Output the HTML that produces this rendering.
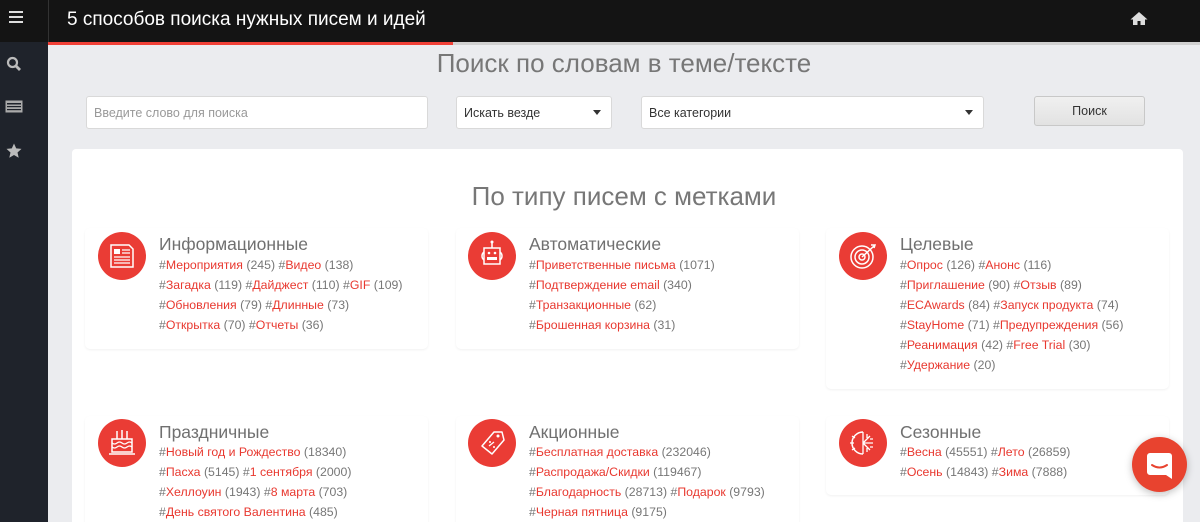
<!DOCTYPE html>
<html><head><meta charset="utf-8"><style>
*{margin:0;padding:0;box-sizing:border-box}
html{overflow:hidden;width:1200px;height:522px}
body{width:1200px;height:522px;overflow:hidden;background:#ebecef;font-family:"Liberation Sans","DejaVu Sans",sans-serif;position:relative}
.side{position:absolute;left:0;top:0;width:48px;height:522px;background:#1f232b}
.sidetop{position:absolute;left:0;top:0;width:48px;height:42px;background:#141414}
.top{position:absolute;left:48px;top:0;width:1152px;height:42px;background:#141414;border-left:1px solid #333}
.top h1{position:absolute;left:18px;top:9px;font-size:19px;font-weight:normal;color:#fff}
.red{position:absolute;left:48px;top:42px;width:405px;height:3px;background:#f04037}
.gline{position:absolute;left:453px;top:42px;width:747px;height:3px;background:#d0d0d0}
.h2{position:absolute;left:0;width:1200px;text-align:center;color:#777;font-size:25px;padding-left:48px}
.inp{position:absolute;top:96px;height:33px;background:#fff;border:1px solid #d9d9d9;border-radius:3px;font-size:12.5px;color:#333;padding:9px 7px}
.arr{position:absolute;right:10px;top:13px;border-left:4.5px solid transparent;border-right:4.5px solid transparent;border-top:5px solid #333}
.btn{position:absolute;left:1034px;top:96px;width:111px;height:30px;background:linear-gradient(#f0f0f0,#e2e2e2);border:1px solid #c8c8c8;border-radius:3px;text-align:center;font-size:12.5px;color:#333;line-height:28px}
.panel{position:absolute;left:72px;top:149px;width:1111px;height:373px;background:#fff;border-radius:4px 4px 0 0}
.card{position:absolute;width:343px;border-radius:5px;box-shadow:0 1px 2px rgba(0,0,0,.06)}
.ic{position:absolute;width:48px;height:48px;border-radius:50%;background:#ea3c35}
.ic svg{position:absolute;left:0;top:0}
.t{position:absolute;font-size:17.5px;color:#707070;white-space:nowrap}
.tags{position:absolute;font-size:12.3px;color:#777;line-height:20px;white-space:nowrap}
.tags b{font-weight:normal;color:#e8382f}
.chat{position:absolute;left:1132px;top:437px;width:55px;height:55px;border-radius:50%;background:#e8432f;box-shadow:0 2px 8px rgba(0,0,0,.25)}
</style></head><body>
<div class="side"></div>
<div class="sidetop"></div>
<svg style="position:absolute;left:9px;top:11px" width="14" height="12"><rect y="0" width="14" height="2" fill="#ddd"/><rect y="5" width="14" height="2" fill="#ddd"/><rect y="10" width="14" height="2" fill="#ddd"/></svg>
<svg style="position:absolute;left:6px;top:56px" width="16" height="16"><circle cx="6.5" cy="6.5" r="4.5" fill="none" stroke="#bbb" stroke-width="2.2"/><path d="M10 10l4 4" stroke="#bbb" stroke-width="2.8"/></svg>
<svg style="position:absolute;left:5px;top:100px" width="18" height="13"><rect x="0.5" y="0.5" width="17" height="12" fill="#aaa"/><rect x="2" y="3" width="14" height="1.5" fill="#1f232b"/><rect x="2" y="6" width="14" height="1.2" fill="#1f232b"/><rect x="2" y="9" width="14" height="1.2" fill="#1f232b"/></svg>
<svg style="position:absolute;left:6px;top:143px" width="16" height="15"><path d="M8 0.5l2.2 4.9 5.3.5-4 3.6 1.2 5.2L8 12l-4.7 2.7 1.2-5.2-4-3.6 5.3-.5z" fill="#bbb"/></svg>
<div class="top"><h1>5 способов поиска нужных писем и идей</h1>
<svg style="position:absolute;left:1081px;top:11px" width="18" height="15"><path d="M9 1L0.5 8.5h2.5V14h4.5v-4h3v4H15V8.5h2.5z" fill="#ddd"/></svg></div>
<div class="red"></div><div class="gline"></div>
<div class="h2" style="top:48px;font-size:26px">Поиск по словам в теме/тексте</div>
<div class="inp" style="left:86px;width:342px;color:#999">Введите слово для поиска</div>
<div class="inp" style="left:456px;width:156px">Искать везде<span class="arr"></span></div>
<div class="inp" style="left:641px;width:343px">Все категории<span class="arr"></span></div>
<div class="btn">Поиск</div>
<div class="panel"></div>
<div class="h2" style="top:181px;font-size:26px">По типу писем с метками</div>

<div class="card" style="left:85px;top:228px;height:121px"></div>
<div class="card" style="left:456px;top:228px;height:121px"></div>
<div class="card" style="left:826px;top:228px;height:161px"></div>
<div class="card" style="left:85px;top:416px;height:120px"></div>
<div class="card" style="left:456px;top:416px;height:120px"></div>
<div class="card" style="left:826px;top:416px;height:79px"></div>

<div class="ic" style="left:98px;top:232px"><svg width="48" height="48"><path d="M13 13h18l4 4v18H13z" fill="none" stroke="#fff" stroke-width="1.5"/><rect x="16" y="17" width="6" height="5" fill="#fff"/><path d="M24 18h8M24 21h8M16 25h16M16 28h16M16 31h16" stroke="#fff" stroke-width="1.3"/></svg></div>
<div class="t" style="left:159px;top:234px">Информационные</div>
<div class="tags" style="left:159px;top:255px">#<b>Мероприятия</b> (245) #<b>Видео</b> (138)<br>#<b>Загадка</b> (119) #<b>Дайджест</b> (110) #<b>GIF</b> (109)<br>#<b>Обновления</b> (79) #<b>Длинные</b> (73)<br>#<b>Открытка</b> (70) #<b>Отчеты</b> (36)</div>

<div class="ic" style="left:468px;top:232px"><svg width="48" height="48"><path d="M24 10v6" stroke="#fff" stroke-width="1.5"/><circle cx="24" cy="10" r="1.5" fill="#fff"/><rect x="16" y="16" width="16" height="16" fill="none" stroke="#fff" stroke-width="1.5"/><circle cx="21" cy="21" r="1.3" fill="#fff"/><circle cx="27" cy="21" r="1.3" fill="#fff"/><rect x="19" y="25" width="10" height="3" fill="#fff"/><path d="M16 20a5 5 0 0 0 0 8M32 20a5 5 0 0 1 0 8" stroke="#fff" fill="none" stroke-width="1.5"/></svg></div>
<div class="t" style="left:529px;top:234px">Автоматические</div>
<div class="tags" style="left:529px;top:255px">#<b>Приветственные письма</b> (1071)<br>#<b>Подтверждение email</b> (340)<br>#<b>Транзакционные</b> (62)<br>#<b>Брошенная корзина</b> (31)</div>

<div class="ic" style="left:839px;top:232px"><svg width="48" height="48"><circle cx="23" cy="25" r="11" fill="none" stroke="#fff" stroke-width="1.5"/><circle cx="23" cy="25" r="7" fill="none" stroke="#fff" stroke-width="1.5"/><circle cx="23" cy="25" r="3" fill="none" stroke="#fff" stroke-width="1.5"/><path d="M23 25l12-11M32 13l4 0-1 3" stroke="#fff" stroke-width="1.5" fill="none"/></svg></div>
<div class="t" style="left:900px;top:234px">Целевые</div>
<div class="tags" style="left:900px;top:255px">#<b>Опрос</b> (126) #<b>Анонс</b> (116)<br>#<b>Приглашение</b> (90) #<b>Отзыв</b> (89)<br>#<b>ECAwards</b> (84) #<b>Запуск продукта</b> (74)<br>#<b>StayHome</b> (71) #<b>Предупреждения</b> (56)<br>#<b>Реанимация</b> (42) #<b>Free Trial</b> (30)<br>#<b>Удержание</b> (20)</div>

<div class="ic" style="left:98px;top:419px"><svg width="48" height="48"><path d="M19 12v8M24 11v9M29 12v8" stroke="#fff" stroke-width="1.5"/><rect x="14" y="20" width="20" height="13" fill="none" stroke="#fff" stroke-width="1.5"/><path d="M14 24q2.5 2 5 0t5 0 5 0 5 0M14 28q2.5 2 5 0t5 0 5 0 5 0" stroke="#fff" fill="none" stroke-width="1.2"/><path d="M11 35h26" stroke="#fff" stroke-width="1.5"/></svg></div>
<div class="t" style="left:159px;top:422px">Праздничные</div>
<div class="tags" style="left:159px;top:442px">#<b>Новый год и Рождество</b> (18340)<br>#<b>Пасха</b> (5145) #<b>1 сентября</b> (2000)<br>#<b>Хеллоуин</b> (1943) #<b>8 марта</b> (703)<br>#<b>День святого Валентина</b> (485)</div>

<div class="ic" style="left:468px;top:419px"><svg width="48" height="48"><path d="M14 27l12-14 8 0 2 8-12 14z" fill="none" stroke="#fff" stroke-width="1.5" stroke-linejoin="round"/><circle cx="30" cy="17" r="1.5" fill="#fff"/><path d="M21 27l5-4" stroke="#fff" stroke-width="1.3"/><circle cx="22" cy="23" r="1" fill="#fff"/><circle cx="26" cy="28" r="1" fill="#fff"/></svg></div>
<div class="t" style="left:529px;top:422px">Акционные</div>
<div class="tags" style="left:529px;top:442px">#<b>Бесплатная доставка</b> (232046)<br>#<b>Распродажа/Скидки</b> (119467)<br>#<b>Благодарность</b> (28713) #<b>Подарок</b> (9793)<br>#<b>Черная пятница</b> (9175)</div>

<div class="ic" style="left:839px;top:419px"><svg width="48" height="48"><path d="M24 13a11 11 0 0 0 0 22" fill="none" stroke="#fff" stroke-width="1.5"/><path d="M24 13v22M24 24h10M24 24l7-7M24 24l7 7M28 15l0 4M31 20l3 0M31 28l3 0M28 33l0-4" stroke="#fff" stroke-width="1.3"/><path d="M11 24h4M13 17l3 2M13 31l3-2" stroke="#fff" stroke-width="1.3"/></svg></div>
<div class="t" style="left:900px;top:422px">Сезонные</div>
<div class="tags" style="left:900px;top:442px">#<b>Весна</b> (45551) #<b>Лето</b> (26859)<br>#<b>Осень</b> (14843) #<b>Зима</b> (7888)</div>

<div class="chat"><svg width="55" height="55"><path d="M18 16h19a3 3 0 0 1 3 3v23l-6-4H18a3 3 0 0 1-3-3V19a3 3 0 0 1 3-3z" fill="#fff"/><path d="M20 28q7.5 5 15 0" stroke="#e8432f" stroke-width="2" fill="none" stroke-linecap="round"/></svg></div>
</body></html>
